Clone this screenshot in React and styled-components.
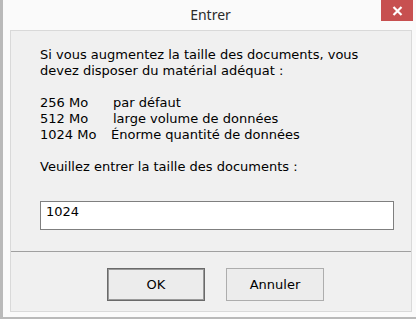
import React from "react";
import styled, { createGlobalStyle } from "styled-components";

const Global = createGlobalStyle`
  html, body { margin: 0; padding: 0; background: #fafafa; }
  body { width: 416px; height: 319px; overflow: hidden; }
`;

const Window = styled.div`
  box-sizing: border-box;
  width: 416px;
  height: 319px;
  background: #fafafa;
  border-left: 3px solid #b9b9b9;
  border-bottom: 2px solid #b9b9b9;
  display: flex;
  flex-direction: column;
  font-family: "DejaVu Sans", Verdana, sans-serif;
`;

const TitleBar = styled.div`
  height: 30px;
  flex: none;
  display: grid;
  grid-template-columns: 1fr auto 1fr;
`;

const Title = styled.div`
  grid-column: 2;
  font-family: "Noto Sans", "Open Sans", sans-serif;
  font-size: 14px;
  color: #2b2b2b;
  line-height: 30px;
  padding-left: 2px;
`;

const CloseButton = styled.div`
  grid-column: 3;
  justify-self: end;
  align-self: start;
  width: 32px;
  height: 21px;
  margin-right: 3px;
  background: #c75050;
  display: flex;
  align-items: center;
  justify-content: center;
`;

const Panel = styled.div`
  box-sizing: border-box;
  height: 282px;
  margin: 0 4px 0 7px;
  background: #f0f0f0;
  border: 1px solid #d9d9d9;
  display: flex;
  flex-direction: column;
`;

const Content = styled.div`
  padding: 16px 20px 0 29px;
  font-size: 13px;
  line-height: 16px;
  color: #000;
`;

const Line = styled.div`
  height: 16px;
  white-space: nowrap;
  margin-top: ${(p) => (p.$gap ? "16px" : "0")};
`;

const SizeRow = styled.div`
  display: flex;
  height: 16px;
  white-space: nowrap;
`;

const SizeLabel = styled.span`
  width: ${(p) => p.$w}px;
  flex: none;
`;

const Field = styled.input`
  box-sizing: border-box;
  display: block;
  width: 354px;
  height: 29px;
  margin-top: 26px;
  border: 1px solid #7f7f7f;
  background: #fff;
  padding: 2px 5px 10px;
  font-family: "DejaVu Sans", Verdana, sans-serif;
  font-size: 13px;
  color: #000;
  outline: none;
`;

const Separator = styled.div`
  margin-top: 21px;
  height: 1px;
  background: #a0a0a0;
`;

const ButtonRow = styled.div`
  display: flex;
  gap: 21px;
  padding: 16px 0 0 96px;
`;

const Button = styled.div`
  box-sizing: border-box;
  width: 98px;
  height: 33px;
  display: flex;
  align-items: center;
  justify-content: center;
  background: #ececec;
  border: 1px solid ${(p) => (p.$default ? "#6a6a6a" : "#adadad")};
  box-shadow: ${(p) => (p.$default ? "inset 0 0 0 1px #9a9a9a" : "none")};
  font-size: 13px;
  color: #000;
`;

export default function App() {
  return (
    <>
      <Global />
      <Window>
        <TitleBar>
          <Title>Entrer</Title>
          <CloseButton>
            <svg width="11" height="10" viewBox="0 0 11 10">
              <path d="M1.5 1 L9.5 9 M9.5 1 L1.5 9" stroke="#fff" strokeWidth="2.2" />
            </svg>
          </CloseButton>
        </TitleBar>
        <Panel>
          <Content>
            <Line>Si vous augmentez la taille des documents, vous</Line>
            <Line>devez disposer du matérial adéquat :</Line>
            <Line $gap>
              <SizeRow><SizeLabel $w={73}>256 Mo</SizeLabel><span>par défaut</span></SizeRow>
            </Line>
            <SizeRow><SizeLabel $w={73}>512 Mo</SizeLabel><span>large volume de données</span></SizeRow>
            <SizeRow><SizeLabel $w={71}>1024 Mo</SizeLabel><span>Énorme quantité de données</span></SizeRow>
            <Line $gap>Veuillez entrer la taille des documents :</Line>
            <Field defaultValue="1024" readOnly />
          </Content>
          <Separator />
          <ButtonRow>
            <Button $default>OK</Button>
            <Button>Annuler</Button>
          </ButtonRow>
        </Panel>
      </Window>
    </>
  );
}
